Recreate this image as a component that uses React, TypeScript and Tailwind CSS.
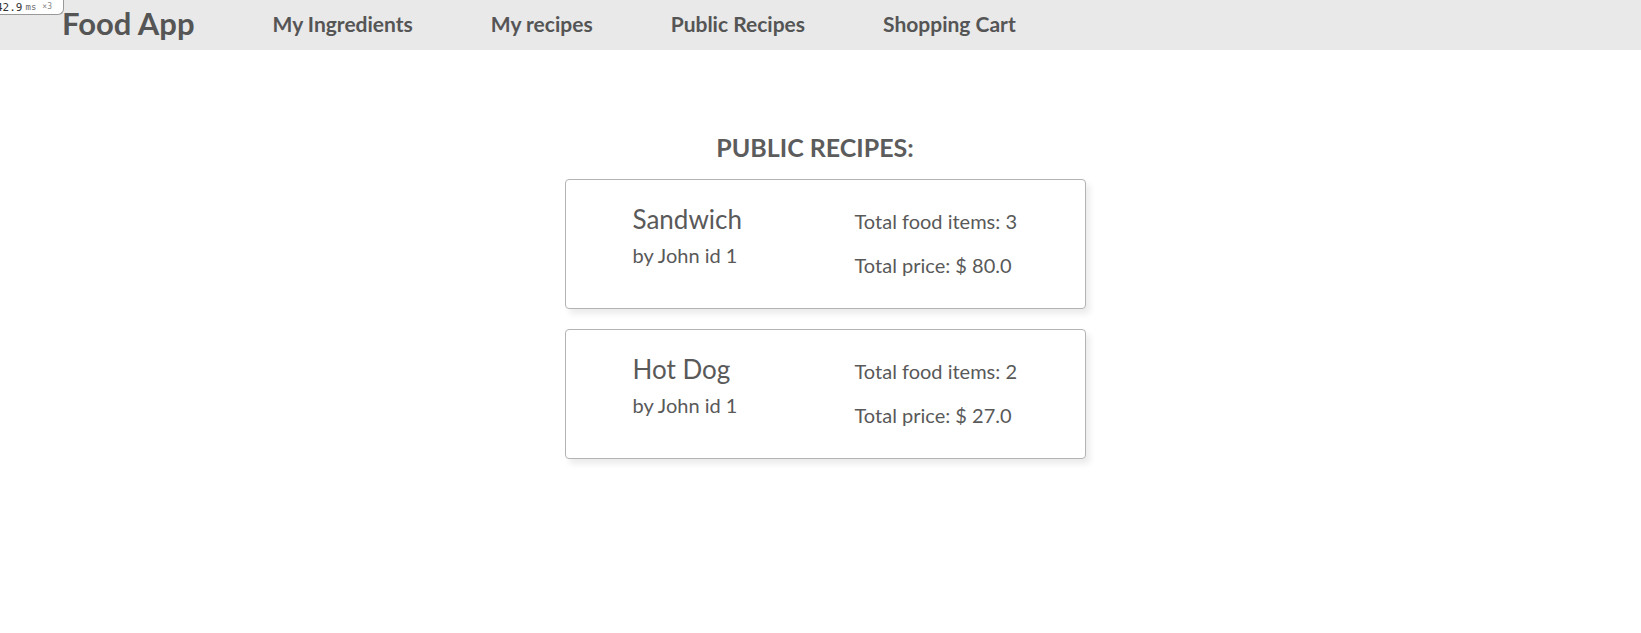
import React from "react";

const recipes = [
  { name: "Sandwich", author: "by John id 1", items: 3, price: "80.0" },
  { name: "Hot Dog", author: "by John id 1", items: 2, price: "27.0" },
];

export default function App() {
  return (
    <div className="min-h-[633px] bg-white text-[#595959]" style={{ fontFamily: "Lato, 'Open Sans', sans-serif" }}>
      <div className="absolute left-0 top-0 z-10 flex h-[15px] w-[64px] items-center overflow-hidden whitespace-nowrap rounded-br-[6px] border-b border-r border-[#999] bg-white leading-none text-[#333]" style={{ fontFamily: "'DejaVu Sans Mono', monospace" }}>
        <span className="-ml-[4px] text-[11px]">42.9</span>
        <span className="ml-[3px] text-[9px] text-[#666]">ms</span>
        <span className="ml-[6px] text-[8px] text-[#888]">×3</span>
      </div>
      <nav className="flex h-[50px] items-center bg-[#e9e9e9] pb-[3px] pl-[62px]">
        <span className="text-[31px] font-bold leading-none text-[#555]">Food App</span>
        <div className="ml-[78px] flex gap-[78px] text-[21px] font-bold text-[#555]">
          <span>My Ingredients</span>
          <span>My recipes</span>
          <span>Public Recipes</span>
          <span>Shopping Cart</span>
        </div>
      </nav>
      <main className="flex flex-col items-center pt-[82px]">
        <h1 className="-ml-[11px] text-[25px] font-bold leading-[30px] text-[#5c5c5c]">PUBLIC RECIPES:</h1>
        <div className="ml-[9px] mt-[17px] flex flex-col gap-[20px]">
          {recipes.map((r) => (
            <div
              key={r.name}
              className="flex h-[130px] w-[521px] rounded-[4px] border border-[#b3b3b3] bg-white pl-[67px] pt-[23px] shadow-[4px_5px_6px_rgba(0,0,0,0.08)]"
            >
              <div className="w-[222px]">
                <div className="text-[26px] leading-[32px]">{r.name}</div>
                <div className="mt-[8px] text-[20px] leading-[24px]">{r.author}</div>
              </div>
              <div className="pt-[6px] text-[20px] leading-[24px]">
                <div>Total food items: {r.items}</div>
                <div className="mt-[20px]">Total price: $ {r.price}</div>
              </div>
            </div>
          ))}
        </div>
      </main>
    </div>
  );
}
